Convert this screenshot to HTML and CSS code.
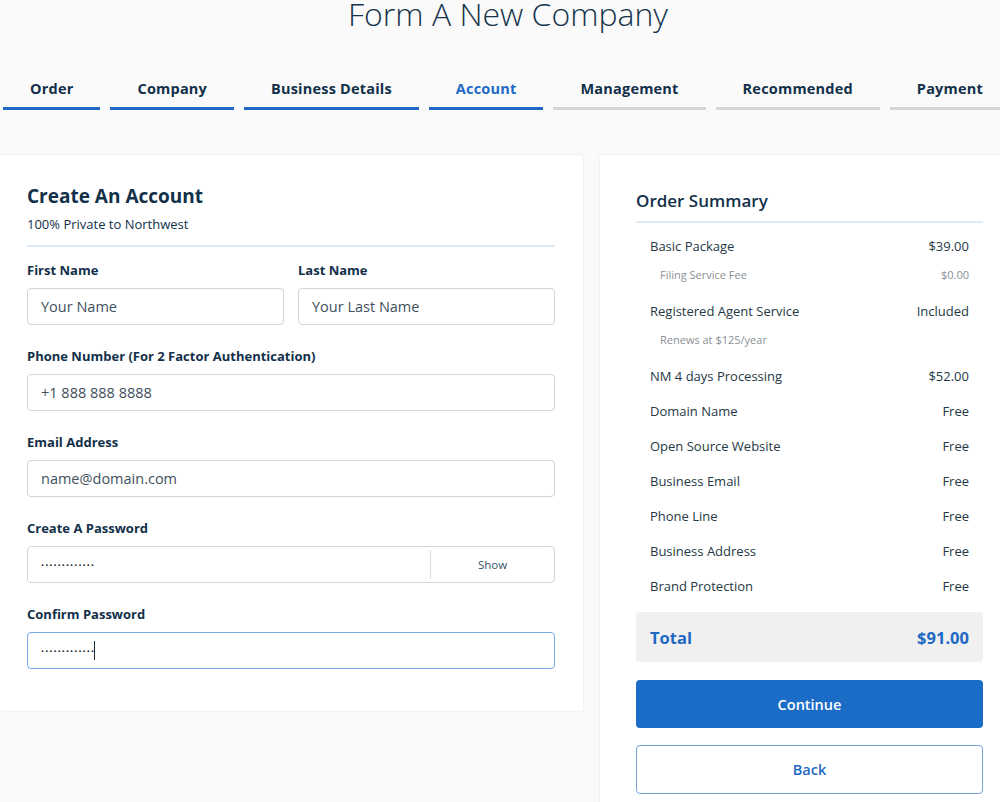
FILE: index.html
```html
<!DOCTYPE html>
<html lang="en">
<head>
  <meta charset="UTF-8" />
  <title>Form A New Company</title>
  <meta name="viewport" content="width=device-width, initial-scale=1.0"/>
  <link rel="stylesheet" href="styles.css">
</head>
<body>

  <h1 class="page-title">Form A New Company</h1>

  <nav class="steps">
    <a class="step done" href="#">Order</a>
    <a class="step done" href="#">Company</a>
    <a class="step done" href="#">Business Details</a>
    <a class="step active" href="#">Account</a>
    <a class="step" href="#">Management</a>
    <a class="step" href="#">Recommended</a>
    <a class="step" href="#">Payment</a>
  </nav>

  <main class="layout">
    <section class="card account-card">
      <h2>Create An Account</h2>
      <p class="subtitle">100% Private to Northwest</p>
      <hr class="divider">

      <form class="account-form">
        <div class="form-row">
          <div class="field">
            <label for="firstName">First Name</label>
            <input type="text" id="firstName" placeholder="Your Name">
          </div>
          <div class="field">
            <label for="lastName">Last Name</label>
            <input type="text" id="lastName" placeholder="Your Last Name">
          </div>
        </div>

        <div class="field">
          <label for="phone">Phone Number (For 2 Factor Authentication)</label>
          <input type="text" id="phone" placeholder="+1 888 888 8888">
        </div>

        <div class="field">
          <label for="email">Email Address</label>
          <input type="text" id="email" placeholder="name@domain.com">
        </div>

        <div class="field">
          <label for="password">Create A Password</label>
          <div class="password-box">
            <input type="password" id="password" value="secretpasswd1">
            <button type="button" class="show-btn">Show</button>
          </div>
        </div>

        <div class="field">
          <label for="confirm">Confirm Password</label>
          <div class="confirm-box">
            <input type="password" id="confirm" class="focused" value="secretpasswd1">
            <span class="caret"></span>
          </div>
        </div>
      </form>
    </section>

    <aside class="card summary-card">
      <h3>Order Summary</h3>
      <hr class="divider">

      <div class="summary-row"><span>Basic Package</span><span>$39.00</span></div>
      <div class="summary-sub"><span>Filing Service Fee</span><span>$0.00</span></div>
      <div class="summary-row"><span>Registered Agent Service</span><span>Included</span></div>
      <div class="summary-sub"><span>Renews at $125/year</span></div>
      <div class="summary-row"><span>NM 4 days Processing</span><span>$52.00</span></div>
      <div class="summary-row"><span>Domain Name</span><span>Free</span></div>
      <div class="summary-row"><span>Open Source Website</span><span>Free</span></div>
      <div class="summary-row"><span>Business Email</span><span>Free</span></div>
      <div class="summary-row"><span>Phone Line</span><span>Free</span></div>
      <div class="summary-row"><span>Business Address</span><span>Free</span></div>
      <div class="summary-row"><span>Brand Protection</span><span>Free</span></div>

      <div class="total-box">
        <span>Total</span>
        <span>$91.00</span>
      </div>

      <button class="btn btn-primary">Continue</button>
      <button class="btn btn-outline">Back</button>
    </aside>
  </main>

</body>
</html>
```

FILE: styles.css
```css
body {
  font-family: 'Open Sans', 'Liberation Sans', sans-serif;
  background: #fafafa;
  color: #123049;
  margin: 0;
  padding: 0;
  overflow: hidden;
}

.page-title {
  margin: 0;
  padding-left: 16px;
  text-align: center;
  font-size: 32px;
  line-height: 28px;
  font-weight: 300;
  color: #16344b;
}

/* Pasos del formulario */
.steps {
  display: flex;
  gap: 10px;
  margin-top: 51px;
  padding-left: 3px;
  white-space: nowrap;
}

.step {
  flex-shrink: 0;
  padding: 0 27px 8px;
  line-height: 20px;
  font-size: 14.5px;
  font-weight: 700;
  letter-spacing: 0.2px;
  color: #123049;
  text-decoration: none;
  border-bottom: 3px solid #d6d6d6;
}

.step.done {
  border-bottom-color: #1d69c3;
}

.step.active {
  color: #1d69c3;
  border-bottom-color: #1d69c3;
}

/* Tarjetas */
.layout {
  display: flex;
  gap: 17px;
  margin-top: 45px;
  align-items: flex-start;
}

.card {
  background: #fff;
  border-radius: 4px;
  box-shadow: 0 0 3px rgba(0,0,0,0.09);
  box-sizing: border-box;
  flex-shrink: 0;
}

.account-card {
  width: 583px;
  height: 556px;
  padding: 29px 28px 0 27px;
}

.account-card h2 {
  margin: 0;
  font-size: 19px;
  line-height: 24px;
  font-weight: 700;
}

.subtitle {
  margin: 7px 0 0;
  font-size: 13px;
  line-height: 18px;
}

.divider {
  border: none;
  height: 2px;
  background: #dde9f5;
  margin: 12px 0 0;
}

.account-form {
  display: flex;
  flex-direction: column;
  gap: 22px;
  margin-top: 14px;
}

.form-row {
  display: flex;
  gap: 14px;
}

.form-row .field {
  flex: 1;
}

label {
  display: block;
  font-size: 13px;
  line-height: 18px;
  font-weight: 700;
  margin-bottom: 9px;
}

input {
  display: block;
  width: 100%;
  box-sizing: border-box;
  height: 37px;
  padding: 0 13px;
  border: 1px solid #d4d4d4;
  border-radius: 4px;
  font-family: inherit;
  font-size: 14.5px;
  color: #3b4d5b;
  background: #fff;
  outline: none;
}

input::placeholder {
  color: #3f505d;
}

input[type="password"] {
  font-size: 8px;
  letter-spacing: 1.15px;
  color: #1a2b38;
}

.password-box {
  display: flex;
  border: 1px solid #d4d4d4;
  border-radius: 4px;
  height: 37px;
  box-sizing: border-box;
  align-items: center;
}

.password-box input {
  border: none;
  height: 35px;
  flex: 1;
}

.show-btn {
  width: 124px;
  height: 29px;
  border: none;
  border-left: 1px solid #dcdcdc;
  background: transparent;
  font-family: inherit;
  font-size: 11.5px;
  color: #34506a;
  cursor: pointer;
}

.confirm-box {
  position: relative;
}

input.focused {
  border-color: #79a7e3;
}

.caret {
  position: absolute;
  left: 67px;
  top: 9px;
  width: 1px;
  height: 19px;
  background: #1a2b38;
}

/* Resumen del pedido */
.summary-card {
  width: 419px;
  height: 700px;
  padding: 35px 36px 0;
}

.summary-card h3 {
  margin: 0;
  font-size: 17px;
  line-height: 22px;
  font-weight: 600;
}

.summary-card .divider {
  margin: 9px 0 6px;
}

.summary-row,
.summary-sub {
  display: flex;
  justify-content: space-between;
  padding: 0 14px;
}

.summary-row {
  height: 35px;
  line-height: 35px;
  font-size: 13px;
  color: #253845;
}

.summary-sub {
  line-height: 22px;
  margin-bottom: 8px;
  padding-left: 24px;
  font-size: 11px;
  color: #8a8f94;
}

.total-box {
  display: flex;
  justify-content: space-between;
  align-items: center;
  height: 50px;
  margin-top: 8px;
  padding: 0 14px;
  background: #f0f0f0;
  border-radius: 4px;
  font-size: 16.5px;
  font-weight: 700;
  color: #1d69c3;
}

.btn {
  display: block;
  width: 100%;
  border-radius: 4px;
  font-family: inherit;
  font-size: 14.5px;
  font-weight: 600;
  cursor: pointer;
}

.btn-primary {
  height: 48px;
  margin-top: 18px;
  background: #1b6cc6;
  border: none;
  color: #fff;
}

.btn-primary:hover {
  background: #155fb0;
}

.btn-outline {
  height: 49px;
  margin-top: 17px;
  background: #fff;
  border: 1px solid #77a3dc;
  color: #1d69c3;
}
```
